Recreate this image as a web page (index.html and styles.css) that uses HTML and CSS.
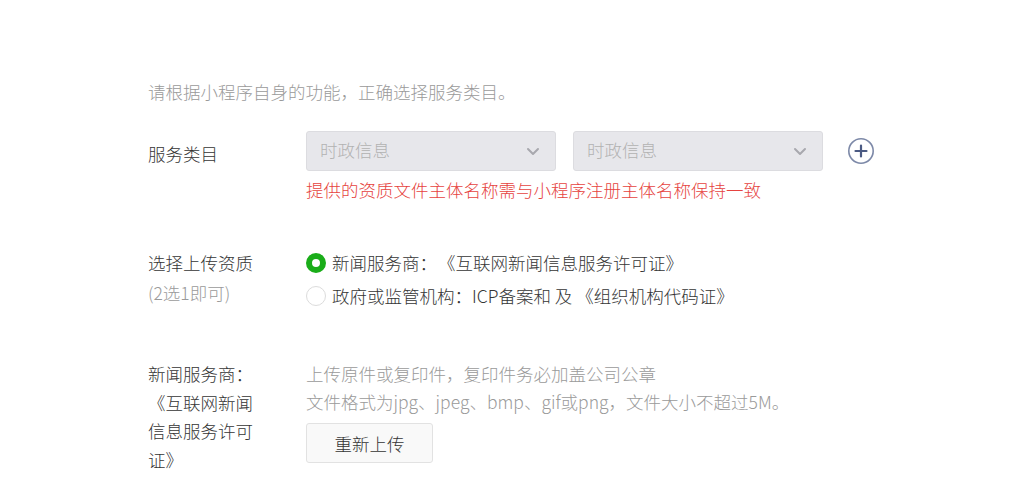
FILE: index.html
```html
<!DOCTYPE html>
<html lang="zh-CN">
<head>
<meta charset="utf-8">
<title>服务类目</title>
<link rel="stylesheet" href="styles.css">
</head>
<body>
<div class="page">
  <p class="hint">请根据小程序自身的功能，正确选择服务类目。</p>

  <div class="row row-category">
    <div class="label label-cat">服务类目</div>
    <div class="field">
      <div class="selects">
        <div class="select"><span>时政信息</span><svg class="chev" width="14" height="9" viewBox="0 0 14 9"><path d="M2 2l5 5 5-5" fill="none" stroke="#a8a8ae" stroke-width="2" stroke-linecap="round" stroke-linejoin="round"/></svg></div>
        <div class="select"><span>时政信息</span><svg class="chev" width="14" height="9" viewBox="0 0 14 9"><path d="M2 2l5 5 5-5" fill="none" stroke="#a8a8ae" stroke-width="2" stroke-linecap="round" stroke-linejoin="round"/></svg></div>
        <svg class="add" width="28" height="28" viewBox="0 0 28 28"><circle cx="14" cy="14" r="12.2" fill="none" stroke="#7d89a8" stroke-width="1.6"/><path d="M14 8.5v11M8.5 14h11" stroke="#4b5a83" stroke-width="2.2" stroke-linecap="round"/></svg>
      </div>
      <p class="error">提供的资质文件主体名称需与小程序注册主体名称保持一致</p>
    </div>
  </div>

  <div class="row row-qual">
    <div class="label label-qual">选择上传资质<br><span class="sub">(2选1即可)</span></div>
    <div class="field radios">
      <div class="radio"><span class="dot checked"></span>新闻服务商：&#8202;《互联网新闻信息服务许可证》</div>
      <div class="radio"><span class="dot"></span>政府或监管机构：ICP备案和 及 《组织机构代码证》</div>
    </div>
  </div>

  <div class="row row-upload">
    <div class="label label-up">新闻服务商：《互联网新闻信息服务许可证》</div>
    <div class="field">
      <p class="tip">上传原件或复印件，复印件务必加盖公司公章</p>
      <p class="tip">文件格式为jpg、jpeg、bmp、gif或png，文件大小不超过5M。</p>
      <button class="btn" type="button">重新上传</button>
    </div>
  </div>
</div>
</body>
</html>
```
FILE: styles.css
```css
* { box-sizing: border-box; }
html, body { margin: 0; background: #fff; }
body {
  font-family: "Microsoft YaHei", "Noto Sans CJK SC", "Noto Sans", sans-serif;
  font-size: 17.5px;
  font-weight: 300;
  color: #353535;
}
p { margin: 0; }
.page {
  padding: 82px 0 0 148px;
}
.hint {
  color: #9a9a9a;
  line-height: 20px;
}
.row {
  display: flex;
}
.label {
  width: 158px;
  flex: none;
}
.row-category { margin-top: 29px; }
.label-cat { line-height: 40px; padding-top: 3px; }
.selects {
  display: flex;
  align-items: center;
}
.select {
  width: 250px;
  height: 40px;
  margin-right: 17px;
  background: #e7e7eb;
  border: 1px solid #dcdce0;
  border-radius: 3px;
  display: flex;
  align-items: center;
  justify-content: space-between;
  padding: 0 15px 3px 13px;
  color: #b2b2b2;
}
.select + .select { margin-right: 24px; }
.chev { margin-top: 3px; }
.add { display: block; }
.error {
  color: #e64340;
  line-height: 24px;
  margin-top: 7px;
}
.row-qual { margin-top: 45px; }
.label-qual { line-height: 30px; padding-top: 1px; }
.sub { color: #9a9a9a; }
.radio {
  display: flex;
  align-items: center;
  line-height: 32px;
  height: 32px;
}
.radio + .radio { height: 34px; line-height: 34px; }
.dot {
  width: 20px;
  height: 20px;
  border-radius: 50%;
  border: 1px solid #dcdcdc;
  margin-right: 6px;
  flex: none;
  background: #fff;
}
.dot.checked {
  border: 6px solid #1aad19;
}
.row-upload { margin-top: 47px; }
.label-up {
  width: 158px;
  padding-right: 43px;
  line-height: 28.5px;
}
.tip {
  color: #9a9a9a;
  line-height: 28px;
}
.btn {
  margin-top: 7px;
  width: 127px;
  height: 40px;
  font: inherit;
  color: #353535;
  background: #f9f9f9;
  border: 1px solid #e2e2e2;
  border-radius: 3px;
  padding: 0;
}
```
